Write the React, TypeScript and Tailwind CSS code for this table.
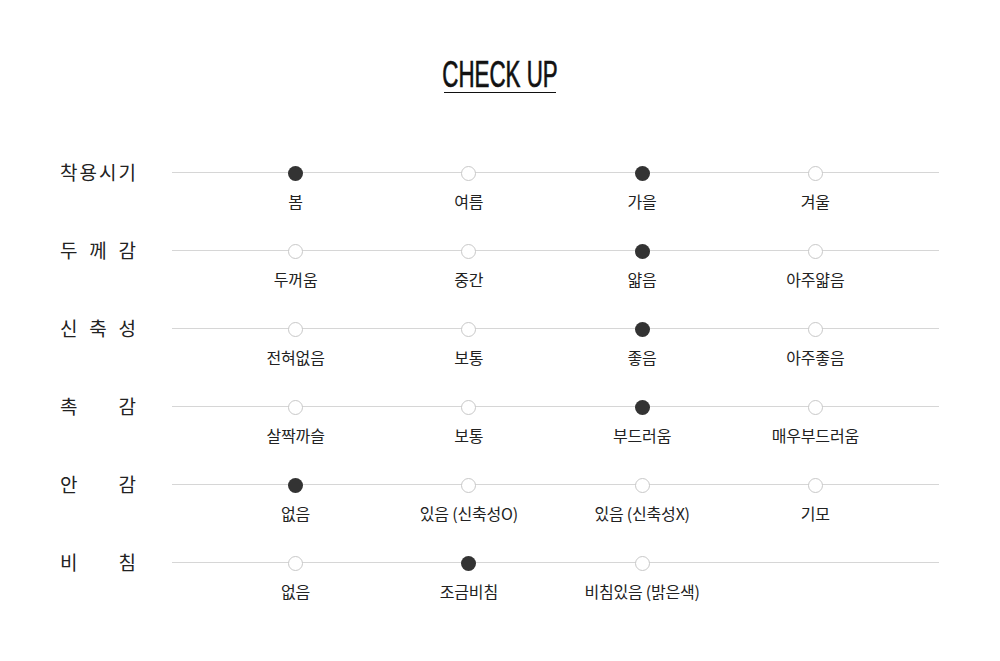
import React from 'react';

type Row = {
  label: string[];
  options: string[];
  checked: number[];
};

const rows: Row[] = [
  { label: ['착', '용', '시', '기'], options: ['봄', '여름', '가을', '겨울'], checked: [0, 2] },
  { label: ['두', '께', '감'], options: ['두꺼움', '중간', '얇음', '아주얇음'], checked: [2] },
  { label: ['신', '축', '성'], options: ['전혀없음', '보통', '좋음', '아주좋음'], checked: [2] },
  { label: ['촉', '감'], options: ['살짝까슬', '보통', '부드러움', '매우부드러움'], checked: [2] },
  { label: ['안', '감'], options: ['없음', '있음 (신축성O)', '있음 (신축성X)', '기모'], checked: [0] },
  { label: ['비', '침'], options: ['없음', '조금비침', '비침있음 (밝은색)'], checked: [1] },
];

function CheckRow({ row }: { row: Row }) {
  return (
    <div className="flex h-[78px]">
      <div className="w-[76px] mr-[36px] flex justify-between h-[27px] items-center text-[19px] leading-none text-[#222]">
        {row.label.map((ch, i) => (
          <span key={i}>{ch}</span>
        ))}
      </div>
      <div className="flex-1 relative">
        <div className="absolute left-0 right-0 top-[14px] h-px bg-[#d6d6d6]" />
        <div className="relative grid grid-cols-4 px-[37px]">
          {[0, 1, 2, 3].map((i) => {
            const opt = row.options[i];
            if (opt === undefined) return <div key={i} />;
            const on = row.checked.includes(i);
            return (
              <div key={i} className="flex flex-col items-center">
                <div className="h-[30px] flex items-center">
                  <span
                    className={
                      on
                        ? 'block w-[15px] h-[15px] rounded-full bg-[#333]'
                        : 'block w-[15px] h-[15px] rounded-full bg-white border border-[#c8c8c8]'
                    }
                  />
                </div>
                <div className="mt-[5px] text-[16px] leading-none text-[#222] whitespace-nowrap tracking-[-0.2px]">
                  {opt}
                </div>
              </div>
            );
          })}
        </div>
      </div>
    </div>
  );
}

export default function App() {
  return (
    <div
      className="w-[1000px] h-[661px] bg-white overflow-hidden"
      style={{ fontFamily: '"Noto Sans CJK KR", "Noto Sans", sans-serif' }}
    >
      <div className="flex justify-center pt-[58px] h-[158px]">
        <div className="w-[112px] h-[35px] flex justify-center border-b-[1.5px] border-[#111]">
          <span
            className="inline-block text-[36px] leading-[34px] font-normal text-[#111] scale-x-[0.62] whitespace-nowrap [-webkit-text-stroke:0.7px_#111]"
            style={{ fontFamily: '"Liberation Sans", Arial, sans-serif' }}
          >
            CHECK UP
          </span>
        </div>
      </div>
      <div className="pl-[60px] pr-[61px]">
        {rows.map((row, i) => (
          <CheckRow key={i} row={row} />
        ))}
      </div>
    </div>
  );
}
